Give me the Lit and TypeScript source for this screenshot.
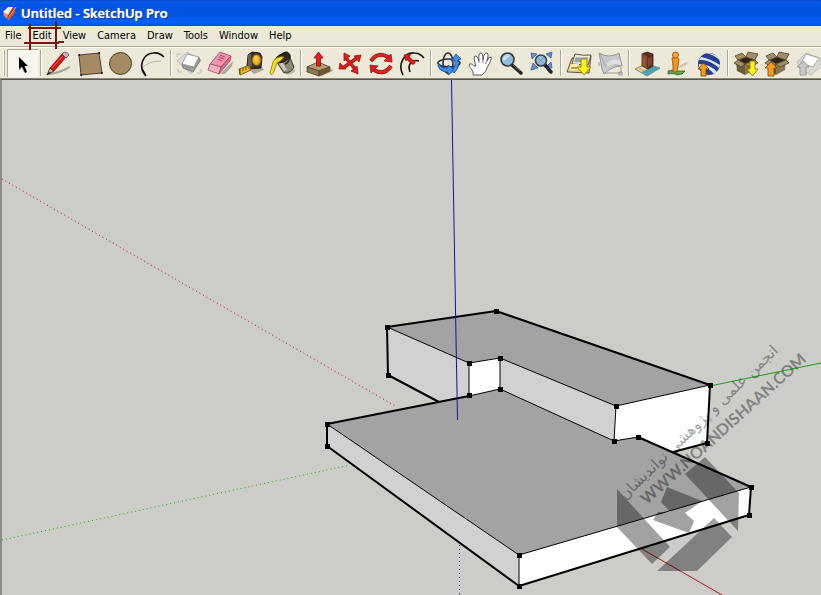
import { LitElement, html, svg, css, SVGTemplateResult } from "lit";
import { customElement } from "lit/decorators.js";
import { classMap } from "lit/directives/class-map.js";

interface Tool {
  name: string;
  art: SVGTemplateResult;
}

const carton = svg`
  <path d="M5 12 L14 15 L14 26 L6 22 Z" fill="#6d5b3a"/>
  <path d="M14 15 L24 11 L23 21 L14 26 Z" fill="#8a7650"/>
  <path d="M7 11 L15 8 L24 11 L14 15 Z" fill="#2e2415"/>
  <path d="M4 7 L11 4 L15 8 L7 11 Z M15 8 L17 3 L27 5 L24 11 Z M3 14 L7 11 L14 15 L10 18 Z M14 15 L24 11 L27 14 L18 18 Z" fill="#a18e66" stroke="#54452a"/>`;

const groups: Tool[][] = [
  [
    {
      name: "Select",
      art: svg`<path d="M12 8 V21 L15 18 L18 24 L20 23 L17.500 17 H21 Z" fill="#000"/><path d="M12 20 L15 18 L17 23" fill="none" stroke="#999"/>`,
    },
  ],
  [
    {
      name: "Line",
      art: svg`
        <path d="M5 25 Q15 24 26 18" stroke="#aaa69a" stroke-width="2" fill="none"/>
        <path d="M3 26 L6 19 L10 22 Z" fill="#d9b887" stroke="#222"/><path d="M3 26 L5 23 L7 24 Z" fill="#111"/>
        <path d="M6 19 L18 5 L22 8 L10 22 Z" fill="#d81414" stroke="#7c0808"/><path d="M8 19 L19 7" stroke="#ff6a5a"/>
        <path d="M18 5 L20 3 Q24 3 25 6 L22 9 Z" fill="#d9a5c0" stroke="#5a4c6a"/>`,
    },
    { name: "Rectangle", art: svg`<path d="M4 6 L24 4 L27 24 L6 26 Z" fill="#a68a63" stroke="#2a2218"/><path d="M3.500 6h1.500M23.500 4h1.500M26 24h1.500M5.500 26h1.500" stroke="#000" stroke-width="2"/>` },
    { name: "Circle", art: svg`<circle cx="14.500" cy="14.500" r="11" fill="#a68a63" stroke="#2a2218"/>` },
    {
      name: "Arc",
      art: svg`<path d="M5 19 Q12 12 24 12" fill="none" stroke="#aaa79b"/><path d="M8 26 C1 17 6 5 16 4 Q22 3 27 8" fill="none" stroke="#111" stroke-width="1.600"/><path d="M5 20 L9 27" stroke="#111" stroke-width="1.600"/>`,
    },
  ],
  [
    {
      name: "Make Component",
      art: svg`
        <path d="M3 12 L13 3 L27 11 L17 25 Z" fill="#dddcd6" stroke="#b3b3b0"/>
        <path d="M8 15 L9 19 L19 23 L26 12 L25 8 Z" fill="#9b9b9b" stroke="#777"/>
        <path d="M13 5 L25 8 L20 18 L8 15 Z" fill="#fff" stroke="#8a8a8a"/>
        <path d="M3 8v-3h4M23 24h4v-4M4 20v3h4" fill="none" stroke="#b0b0ac"/>`,
    },
    {
      name: "Eraser",
      art: svg`
        <path d="M15 25 L28 12 L27 17 L20 25 Z" fill="#aaa79c"/>
        <path d="M15 3 L26 7 L16 18 L5 15 Z" fill="#ee93ab" stroke="#9d4e63"/>
        <path d="M5 15 L16 18 L14 25 L3 21 Z" fill="#f7b2c2" stroke="#9d4e63"/>
        <path d="M16 18 L26 7 L25 12 L14 25 Z" fill="#d8708b" stroke="#9d4e63"/>
        <path d="M15 6 l5 2 M14 8 l5 2 M13 10 l4 2" stroke="#a82f50"/>`,
    },
    {
      name: "Tape Measure",
      art: svg`
        <path d="M14 21 L26 18 L28 21 L18 25 Z" fill="#aaa79c"/>
        <path d="M12 6 L16 3 L24 4 L26 8 L25 19 L14 20 L11 17 Z" fill="#35332e" stroke="#111"/>
        <path d="M12 6 L15 5 L16 18 L12 17 Z" fill="#66635b"/>
        <ellipse cx="20.500" cy="11" rx="4.500" ry="5.500" fill="#e9a71e" stroke="#6b4a05"/><ellipse cx="20" cy="10" rx="2" ry="3" fill="#f8c94c"/>
        <path d="M14 16 L3 20 L4 26 L15 21 Z" fill="#f2b911" stroke="#5a4207"/><path d="M7 19v3M10 18v3M13 17v3M4 20v5" stroke="#3a2b05"/>`,
    },
    {
      name: "Paint Bucket",
      art: svg`
        <path d="M18 24 L28 20 L28 23 L21 26 Z" fill="#bbb8ad"/>
        <path d="M9 12 L22 6 L27 18 Q25 24 17 24 Z" fill="#8c8873" stroke="#26231a"/>
        <path d="M11 13 L17 22 L20 21 L14 11 Z" fill="#c9c6b4"/>
        <ellipse cx="15.500" cy="9" rx="8" ry="4" transform="rotate(-24 15.500 9)" fill="#312a12" stroke="#111"/>
        <path d="M17 8 Q9 7 6 13 L3 24 Q5 28 7 22 L10 14 Q13 13 17 8 Z" fill="#f5df1d" stroke="#927900"/>
        <path d="M14 6 Q20 0 23 7 Q22 14 18 15" fill="none" stroke="#222" stroke-width="1.500"/>`,
    },
  ],
  [
    {
      name: "Push/Pull",
      art: svg`
        <path d="M15 26 L28 20 L29 22 L18 27 Z" fill="#b6b2a4"/>
        <path d="M3 18 L14 13 L26 18 L15 22 Z" fill="#b09a70" stroke="#4f422a"/><path d="M3 18 L15 22 V27 L3 23 Z" fill="#8c774e" stroke="#4f422a"/><path d="M15 22 L26 18 V22 L15 27 Z" fill="#6d5a37" stroke="#4f422a"/>
        <path d="M14.500 3 L19 9 H16.500 V17 H12.500 V9 H10 Z" fill="#e31b1b" stroke="#8c0d0d"/>`,
    },
    {
      name: "Move",
      art: svg`
        <path d="M11 9 L20 20 M22 9 L8 19" stroke="#99110f" stroke-width="3.400"/><path d="M11 9 L20 20 M22 9 L8 19" stroke="#e31b1b" stroke-width="2"/>
        <path d="M9 4 L15 7 L9 12 Z M19 7 L26 6 L24 13 Z M4 20 L5 14 L11 20 Z M16 22 L22 17 L23 25 Z" fill="#e31b1b" stroke="#99110f"/>`,
    },
    {
      name: "Rotate",
      art: svg`
        <path d="M5 12 Q12 2 22 8" fill="none" stroke="#991210" stroke-width="4"/><path d="M5 12 Q12 2 22 8" fill="none" stroke="#e32323" stroke-width="2.600"/>
        <path d="M18 12 L26 13 L25 5 Z" fill="#e31b1b" stroke="#99110f"/>
        <path d="M25 17 Q18 27 8 21" fill="none" stroke="#991210" stroke-width="4"/><path d="M25 17 Q18 27 8 21" fill="none" stroke="#e32323" stroke-width="2.600"/>
        <path d="M4 16 L12 17 L5 24 Z" fill="#e31b1b" stroke="#99110f"/>`,
    },
    {
      name: "Offset",
      art: svg`
        <path d="M6 26 C0 15 8 3 17 4 Q23 4 27 9" fill="none" stroke="#111" stroke-width="1.600"/>
        <path d="M13 23 C10 15 15 10 22 12" fill="none" stroke="#111" stroke-width="1.600"/>
        <path d="M16 14 L11 9" fill="none" stroke="#99110f" stroke-width="4"/><path d="M18 11 Q18 15 15 15" fill="none" stroke="#d81515" stroke-width="1.500"/><path d="M7 6 L14 5 L9 12 Z" fill="#e31b1b" stroke="#99110f"/><path d="M16 14 L11 9" stroke="#e31b1b" stroke-width="2.600"/>`,
    },
  ],
  [
    {
      name: "Orbit",
      art: svg`
        <ellipse cx="15" cy="14" rx="11" ry="4" fill="none" stroke="#2b3038" stroke-width="1.600"/>
        <ellipse cx="14" cy="14" rx="5" ry="10" fill="none" stroke="#2b3038" stroke-width="1.600"/>
        <path d="M4 13 Q6 20 14 19 L14 16 L21 21 L14 26 V23 Q3 23 4 13 Z" fill="#3b8df0" stroke="#164a9a"/>
        <path d="M18 22 Q22 17 21 11 L17 12 L22 5 L27 10 L24 11 Q26 19 20 24 Z" fill="#3b8df0" stroke="#164a9a"/>`,
    },
    {
      name: "Pan",
      art: svg`<path d="M8 26 C9 21 5 20 4 16 Q5 13 9 17 L11 17 Q8 9 10 7 Q12 6 14 12 Q13 4 16 4 Q18 4 18 11 Q19 3 22 4 Q24 5 22 12 Q24 7 26 8 Q27 10 23 17 Q21 23 17 26 Z" fill="#fff" stroke="#333"/><path d="M14 12v2M18 11v3M21.500 12l-1 3" stroke="#666"/>`,
    },
    {
      name: "Zoom",
      art: svg`<path d="M16 16 L25 24" stroke="#222" stroke-width="3.500" stroke-linecap="round"/><path d="M17 16 L24 22" stroke="#85817a"/><circle cx="11.500" cy="10.500" r="6.500" fill="#8fbbdc" stroke="#33383e" stroke-width="1.600"/><path d="M7 9 Q9 5 14 6 Q12 10 7 12 Z" fill="#c9e1f2"/>`,
    },
    {
      name: "Zoom Extents",
      art: svg`
        <path d="M4 4 L10 5 L5 10 Z M25 3 L19 5 L24 9 Z M4 21 L6 14 L11 19 Z M25 19 L24 13 L20 17 Z" fill="#6b8cd0" stroke="#3e5b98"/>
        <path d="M18 16 L24 23" stroke="#222" stroke-width="3.500" stroke-linecap="round"/><circle cx="14" cy="11.500" r="5.500" fill="#91bbd6" stroke="#33404c" stroke-width="1.600"/><path d="M11 9 l6 5 M17 8 l-6 6" stroke="#6a9abf"/>`,
    },
  ],
  [
    {
      name: "Get Current View",
      art: svg`
        <path d="M3 23 L8 9 L27 7 L25 24 Z" fill="#e6cf86" stroke="#333"/><path d="M8 15 L11 5 Q20 7 27 6 L24 16 Z" fill="#f3ecd0" stroke="#333"/>
        <path d="M10 13 L12 8 Q18 9 24 8 L23 14 Z" fill="#8fa5c0"/><path d="M5 21 L7 15 H15 L14 21 Z" fill="#faf0b0"/><path d="M7 19 h6" stroke="#c29a35" stroke-width="2"/>
        <path d="M17 10 H23 V18 H27 L20 26 L13 18 H17 Z" fill="#fff21a" stroke="#857300"/>`,
    },
    {
      name: "Toggle Terrain",
      art: svg`<path d="M4 4 Q14 10 24 4 L27 17 Q17 17 9 25 L7 20 Z" fill="#c6c7c9" stroke="#888"/><path d="M5 4 L10 17 Q17 14 26 17" fill="none" stroke="#a2a2a2"/><path d="M12 14 Q18 9 25 11 L26 16 Q18 14 12 18 Z" fill="#dedfe0"/><path d="M10 24 H26 V18 M24 23h3v3h-3z M4 13v4" fill="none" stroke="#888"/>`,
    },
  ],
  [
    {
      name: "Add New Building",
      art: svg`
        <path d="M3 20 L14 15 L28 19 L15 27 Z" fill="#e4ecda" stroke="#5c6b64"/><path d="M9 23 L21 17 L28 19 L15 27 Z" fill="#4aa2b0"/><path d="M4 20 L9 18 L14 21 L9 23 Z" fill="#e6c078"/>
        <path d="M10 5 L15 3 L21 5 V17 L16 20 L10 17 Z" fill="#60301f" stroke="#381a10"/><path d="M10 5 L15 7 V20 L10 17 Z" fill="#884832"/><path d="M12 9v8M17 9v8M19 8v8" stroke="#a56850"/>`,
    },
    {
      name: "Add Location",
      art: svg`
        <path d="M14 20 Q18 14 26 13 L23 16 Z" fill="#c4c2b9"/>
        <path d="M5 22 Q9 20 14 22 L22 22 Q20 26 14 26 Q12 24 5 25 Z" fill="#5fa552" stroke="#2d6828"/>
        <path d="M9 9 Q13 7 16 10 L15 17 L14 23 H10 V17 Z" fill="#ee9422" stroke="#934905"/><circle cx="12.500" cy="6" r="3" fill="#f4a63b" stroke="#934905"/>`,
    },
    {
      name: "Preview in Google Earth",
      art: svg`
        <circle cx="15" cy="15" r="11" fill="#243f91"/><path d="M7 8 Q15 9 26 16 L25 19 Q15 10 5 11 Z M12 4 Q20 6 26 11 L24 8 Q20 4 12 4 Z M5 15 Q16 15 23 23 L20 25 Q14 17 5 18 Z" fill="#d9e4f4"/>
        <path d="M9.500 14 L15 20 H12 V27 H7 V20 H4 Z" fill="#f69a20" stroke="#7d4600"/>`,
    },
  ],
  [
    { name: "Get Models", art: svg`${carton}<path d="M19 12 H24 V20 H27 L21.500 27 L16 20 H19 Z" fill="#fff21a" stroke="#857300"/>` },
    { name: "Share Model", art: svg`${carton}<path d="M9 13 L15 19 H12 V27 H6 V19 H3 Z" fill="#f69a20" stroke="#7d4600"/>` },
    {
      name: "Share Component",
      art: svg`
        <path d="M4 13 L13 4 L27 9 L27 18 L18 26 L7 20 Z" fill="#d9d8d4" stroke="#b5b5b2"/><path d="M13 5 L26 9 L20 18 L8 14 Z" fill="#fff" stroke="#999"/>
        <path d="M10.500 12 L16 18 H13 V26 H7 V18 H4 Z" fill="#c8c8c8" stroke="#8b8b8b"/>`,
    },
  ],
];

const menus = ["File", "Edit", "View", "Camera", "Draw", "Tools", "Window", "Help"];

const vertices = [
  [387, 327], [496, 311], [710, 385], [616, 406], [500, 358], [469, 363], [388, 375], [469, 395],
  [500, 389], [614, 441], [638, 437], [707, 443], [327, 424], [327, 446], [519, 555], [519, 586], [751, 487], [749, 515],
];

@customElement("title-bar")
export class TitleBar extends LitElement {
  static styles = css`
    :host {
      display: flex;
      align-items: center;
      gap: 3px;
      height: 26px;
      padding-left: 2px;
      background: linear-gradient(#0347c8 0, #0a5cea 8%, #0054e3 20%, #0055e5 60%, #0262fb 85%, #0050d8 100%);
    }
    .logo {
      width: 16px;
      height: 18px;
    }
    .caption {
      margin: 0;
      color: #fff;
      font: 600 13px/20px "Open Sans", "Noto Sans", sans-serif;
      text-shadow: 0 0 1px #fff, 1px 1px 0 #0b2f8c;
      white-space: nowrap;
    }
  `;
  render() {
    return html`
      <svg class="logo" viewBox="0 0 16 18" aria-hidden="true">
        <path d="M2 8 L7 3 L12 3 L13 7 L8 15 L4 14 Z" fill="#a3331f" />
        <path d="M1 8 L6 3 L11 3 L6 11 Z" fill="#fff0dc" />
        <path d="M1 8 L6 11 L5 15 L2 12 Z" fill="#e49068" />
        <path d="M7 13 L14 3" stroke="#e8b48e" />
        <path d="M6 16 L13 7" stroke="#d9583c" stroke-width="2" />
      </svg>
      <h1 class="caption">Untitled - SketchUp Pro</h1>
    `;
  }
}

@customElement("menu-bar")
export class MenuBar extends LitElement {
  static styles = css`
    :host {
      display: flex;
      align-items: center;
      gap: 11px;
      height: 20px;
      padding: 0 5px 1px;
      box-sizing: border-box;
      background: #ece9d8;
    }
    .item {
      position: relative;
      padding: 0;
      border: 0;
      background: none;
      color: #000;
      font: 11px/16px "DejaVu Sans Condensed", "DejaVu Sans", sans-serif;
      white-space: nowrap;
    }
    .marker {
      position: absolute;
      left: -9px;
      top: -8px;
      width: 42px;
      height: 31px;
      pointer-events: none;
    }
  `;
  render() {
    return menus.map(
      (name) => html`<button class="item">
        ${name}${name === "Edit"
          ? html`<svg class="marker" viewBox="0 0 42 31" aria-hidden="true">
              <path d="M5 8 H38 M1 23 H36 M35 22 H41 M7 4 V30 M33 1 V29" fill="none" stroke="#7b1414" stroke-width="2" />
            </svg>`
          : ""}
      </button>`,
    );
  }
}

@customElement("tool-bar")
export class ToolBar extends LitElement {
  static styles = css`
    :host {
      display: flex;
      align-items: center;
      height: 33px;
      box-sizing: border-box;
      border-top: 1px solid #aca899;
      border-bottom: 1px solid #8b8878;
      box-shadow: inset 0 1px #fff;
      background: #ece9d8;
      overflow: hidden;
    }
    .grip {
      flex: none;
      width: 1px;
      height: 26px;
      margin: 0 2px 0 3px;
      border-right: 1px solid #aca899;
      background: #fff;
    }
    .group {
      display: flex;
      flex: none;
    }
    .group + .group::before {
      content: "";
      width: 1px;
      height: 26px;
      margin: 1px 2px;
      border-left: 1px solid #aca899;
      background: #fff;
    }
    .tool {
      display: block;
      box-sizing: border-box;
      width: 31px;
      height: 28px;
      padding: 0;
      border: 0;
      background: none;
    }
    .pressed {
      background: #f7f5ee;
      box-shadow: inset 1px 1px #aca899, inset -1px -1px #fff;
    }
    .art {
      display: block;
      width: 31px;
      height: 28px;
      stroke-width: 0.8;
    }
  `;
  render() {
    return html`<span class="grip"></span>${groups.map(
        (group) => html`<div class="group">
          ${group.map(
            (tool) => html`<button class=${classMap({ tool: true, pressed: tool.name === "Select" })} aria-label=${tool.name}>
              <svg class="art" viewBox="0 0 31 28" aria-hidden="true">${tool.art}</svg>
            </button>`,
          )}
        </div>`,
      )}`;
  }
}

@customElement("model-view")
export class ModelView extends LitElement {
  static styles = css`
    :host {
      display: block;
      min-height: 0;
      overflow: hidden;
      border-left: 2px solid #8b8a83;
      border-top: 1px solid #55544d;
      box-sizing: border-box;
      background: #cccdc8;
    }
    .scene {
      display: block;
      width: 100%;
      height: 100%;
    }
    .dark { fill: #a3a3a3; }
    .light { fill: #d1d1d1; }
    .white { fill: #fff; }
    .thin { fill: none; stroke: #000; stroke-width: 1px; }
    .bold { fill: none; stroke: #000; stroke-width: 2px; stroke-linejoin: round; }
    .axis { fill: none; stroke-width: 1px; }
    .hidden { stroke-dasharray: 1 3; }
    .red { stroke: #b01818; }
    .green { stroke: #18a018; }
    .blue { stroke: #1414a0; }
    .stamp { fill: #000; opacity: 0.36; }
    .latin { font: bold 16px "Lato", sans-serif; }
    .persian { font: 15px "DejaVu Sans", sans-serif; }
  `;
  render() {
    return html`
      <svg class="scene" viewBox="2 80 819 515" preserveAspectRatio="xMinYMin slice" role="img" aria-label="Model">
        <path class="axis hidden red" d="M2 179 L397 407" />
        <path class="axis hidden green" d="M2 540 L350 465" />
        <path class="axis green" d="M710 386 L821 363" />
        <path class="axis red" d="M642 549 L722 595" />
        <path class="axis hidden blue" d="M459.500 545 V595" />

        <path class="dark" d="M387 327 L496 311 L710 385 L616 406 L500 358 L469 363 Z" />
        <path class="light" d="M387 327 L469 363 V396 L439 402 L388 375 Z M500 358 L616 406 L614 441 L500 389 Z" />
        <path class="white" d="M469 363 L500 358 V389 L469 396 Z M616 406 L710 385 L707 443 L673 452 L638 437 L614 441 Z" />
        <path class="dark" d="M327 424 L469 396 L500 389 L614 441 L638 437 L751 487 L519 555 Z" />
        <path class="light" d="M327 424 L519 555 V586 L327 446 Z" />
        <path class="white" d="M519 555 L751 487 L749 515 L519 586 Z" />

        <path class="thin" d="M387 327 L469 363 L500 358 L616 406 L710 385 M469 363 V396 L500 389 V358 M616 406 L614 441 L500 389 M614 441 L638 437 M327 424 L519 555 L751 487 M519 555 V586" />
        <path class="bold" d="M439 402 L388 375 L387 327 L496 311 L710 385 L707 443 L673 452 M469 396 L327 424 V446 L519 586 L749 515 L751 487 L638 437" />
        ${vertices.map(([x, y]) => svg`<rect x=${x - 2} y=${y - 2} width="5" height="5"/>`)}
        <path class="axis blue" d="M451.500 80 L456 338 L457.500 420" />

        <g class="stamp">
          <path d="M617 489 L670 547 L652 564 L617 527 Z" />
          <path d="M685 474 L705 457 L739 493 L738 531 Z" />
          <path d="M657 571 L714 518 L732 537 L697 571 Z" />
          <path d="M667 487 L702 501 L685 513 L694 521 L689 533 L653 520 L658 512 L670 512 L661 502 Z" />
          <text class="latin" text-anchor="middle" transform="translate(727 433) rotate(-42)">WWW.NOANDISHAAN.COM</text>
          <text class="persian" text-anchor="middle" transform="translate(702 426) rotate(-44)">انجمن علمی و پژوهشی نواندیشان</text>
        </g>
      </svg>
    `;
  }
}

@customElement("app-root")
export class AppRoot extends LitElement {
  static styles = css`
    :host {
      display: grid;
      grid-template-rows: auto auto auto minmax(0, 1fr);
      height: 100vh;
      overflow: hidden;
      background: #cccdc8;
    }
    .menus {
      z-index: 1;
    }
  `;
  render() {
    return html`
      <title-bar></title-bar>
      <menu-bar class="menus"></menu-bar>
      <tool-bar></tool-bar>
      <model-view></model-view>
    `;
  }
}
